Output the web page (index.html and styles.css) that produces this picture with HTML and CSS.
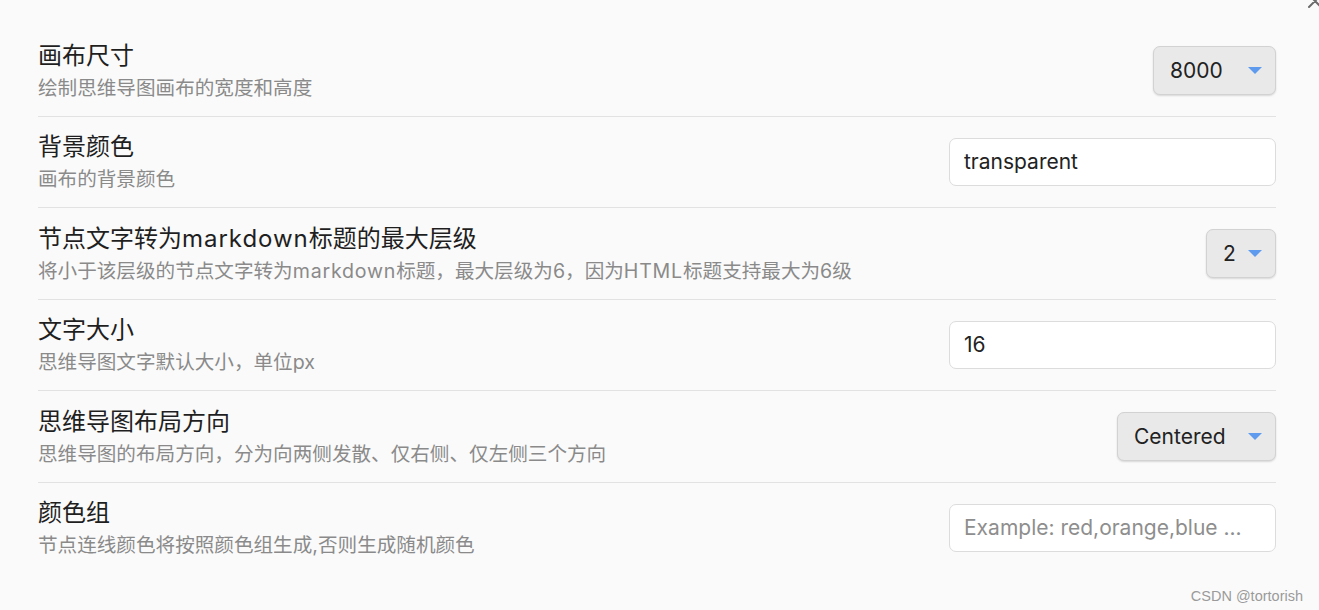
FILE: index.html
```html
<!DOCTYPE html>
<html lang="zh-CN">
<head>
<meta charset="utf-8">
<title>设置</title>
<link rel="stylesheet" href="styles.css">
</head>
<body>
<button class="close" aria-label="关闭">
  <svg width="18" height="18" viewBox="0 0 18 18"><path d="M3 3 L15 15 M15 3 L3 15" stroke="#6b6b6b" stroke-width="2" stroke-linecap="round" fill="none"/></svg>
</button>
<main class="settings">
  <div class="setting-item">
    <div class="info">
      <div class="name">画布尺寸</div>
      <div class="desc">绘制思维导图画布的宽度和高度</div>
    </div>
    <div class="dropdown w-size"><span>8000</span><i class="caret"></i></div>
  </div>
  <div class="setting-item">
    <div class="info">
      <div class="name">背景颜色</div>
      <div class="desc">画布的背景颜色</div>
    </div>
    <input class="text-input" type="text" value="transparent">
  </div>
  <div class="setting-item">
    <div class="info">
      <div class="name">节点文字转为<span class="latin">markdown</span>标题的最大层级</div>
      <div class="desc">将小于该层级的节点文字转为<span class="latin">markdown</span>标题，最大层级为6，因为<span class="latin">HTML</span>标题支持最大为6级</div>
    </div>
    <div class="dropdown w-level"><span>2</span><i class="caret"></i></div>
  </div>
  <div class="setting-item">
    <div class="info">
      <div class="name">文字大小</div>
      <div class="desc">思维导图文字默认大小，单位px</div>
    </div>
    <input class="text-input" type="text" value="16">
  </div>
  <div class="setting-item">
    <div class="info">
      <div class="name">思维导图布局方向</div>
      <div class="desc">思维导图的布局方向，分为向两侧发散、仅右侧、仅左侧三个方向</div>
    </div>
    <div class="dropdown w-layout"><span>Centered</span><i class="caret"></i></div>
  </div>
  <div class="setting-item">
    <div class="info">
      <div class="name">颜色组</div>
      <div class="desc">节点连线颜色将按照颜色组生成,否则生成随机颜色</div>
    </div>
    <input class="text-input" type="text" placeholder="Example: red,orange,blue ...">
  </div>
</main>
<div class="watermark">CSDN @tortorish</div>
</body>
</html>
```

FILE: styles.css
```css
html, body {
  margin: 0;
  padding: 0;
  background: #fafafa;
  height: 100%;
  overflow: hidden;
}
body {
  position: relative;
  font-family: Inter, "Noto Sans CJK SC", sans-serif;
  color: #222;
}
.close {
  position: absolute;
  top: -8px;
  right: -5px;
  padding: 0;
  margin: 0;
  border: 0;
  background: transparent;
  line-height: 0;
}
.settings {
  padding: 25px 43px 0 38px;
}
.setting-item {
  display: flex;
  align-items: center;
  padding: 12.5px 0 13px;
  border-top: 1px solid #e2e2e2;
}
.setting-item:first-child {
  border-top: 0;
}
.info {
  flex: 1;
  min-width: 0;
}
.name {
  font-size: 24px;
  line-height: 36px;
  color: #1f1f1f;
}
.desc {
  font-size: 19.6px;
  line-height: 29px;
  color: #8a8a8a;
}
.latin {
  letter-spacing: 0.04em;
}
.dropdown {
  display: flex;
  align-items: center;
  justify-content: space-between;
  box-sizing: border-box;
  height: 49px;
  padding: 0 13px 0 16px;
  border: 1px solid #d2d2d2;
  border-radius: 7px;
  background: #e9e9e9;
  box-shadow: 0 1px 2px rgba(0, 0, 0, 0.14);
  font-size: 21px;
  color: #222;
}
.w-size { width: 123px; }
.w-level { width: 70px; }
.w-layout { width: 159px; }
.caret {
  width: 0;
  height: 0;
  border-left: 7px solid transparent;
  border-right: 7px solid transparent;
  border-top: 7px solid #5e9bef;
}
.text-input {
  box-sizing: border-box;
  width: 327px;
  height: 48px;
  margin: 0;
  padding: 0 14px;
  border: 1px solid #dcdcdc;
  border-radius: 7px;
  background: #fff;
  font-family: Inter, "Noto Sans CJK SC", sans-serif;
  font-size: 21px;
  color: #222;
  outline: none;
}
.text-input::placeholder {
  color: #8e8e8e;
}
.watermark {
  position: absolute;
  right: 16px;
  bottom: 6px;
  font-family: "Liberation Sans", "Noto Sans CJK SC", sans-serif;
  font-size: 14.5px;
  color: #9a9a9a;
}
```
